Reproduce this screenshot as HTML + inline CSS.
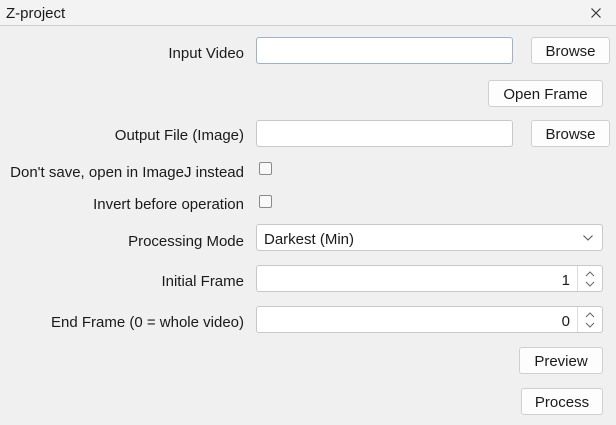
<!DOCTYPE html>
<html><head><style>
*{box-sizing:border-box;margin:0;padding:0}
body{width:616px;height:425px;background:#f0f0f0;font-family:"Liberation Sans",sans-serif;font-size:15px;color:#1a1a1a;position:relative;overflow:hidden}
.a{position:absolute}
.lbl{position:absolute;right:372px;white-space:nowrap;line-height:17px}
.box{position:absolute;background:#fff;border:1px solid #c8c8c8;border-radius:3px}
.btn{position:absolute;background:#fdfdfd;border:1px solid #cfcfcf;border-radius:3px;text-align:center;line-height:28px}
.cb{position:absolute;width:13px;height:13px;border:1px solid #8a8a8a;border-radius:2px;background:#f8f8f8}
.num{position:absolute;right:32px;top:6px;line-height:17px}
.sp{position:absolute;right:0;top:0;bottom:0;width:25px;border-left:1px solid #dcdcdc}
</style></head><body>
<div class="a" style="left:0;top:0;width:616px;height:26px;background:#f3f3f3;border-bottom:1px solid #cfcfcf"></div>
<div class="a" style="left:6px;top:5px;line-height:17px">Z-project</div>
<svg class="a" style="left:590px;top:7px" width="12" height="12"><path d="M1.5 1.5L10.5 10.5M10.5 1.5L1.5 10.5" stroke="#333" stroke-width="1.2"/></svg>

<div class="lbl" style="top:45px">Input Video</div>
<div class="box" style="left:256px;top:37px;width:257px;height:27px;border-color:#99b4d1"></div>
<div class="btn" style="left:531px;top:37px;width:79px;height:27px">Browse</div>
<div class="btn" style="left:488px;top:80px;width:115px;height:27px">Open Frame</div>

<div class="lbl" style="top:127px">Output File (Image)</div>
<div class="box" style="left:256px;top:120px;width:257px;height:27px"></div>
<div class="btn" style="left:531px;top:120px;width:79px;height:27px">Browse</div>

<div class="lbl" style="top:164px">Don't save, open in ImageJ instead</div>
<div class="cb" style="left:259px;top:162px"></div>
<div class="lbl" style="top:196px">Invert before operation</div>
<div class="cb" style="left:259px;top:195px"></div>

<div class="lbl" style="top:233px">Processing Mode</div>
<div class="box" style="left:256px;top:224px;width:347px;height:27px"><div class="a" style="left:7px;top:6px;line-height:17px">Darkest (Min)</div>
<svg class="a" style="right:9px;top:10px" width="10" height="6"><path d="M0.5 0.5L5 5L9.5 0.5" stroke="#555" fill="none"/></svg></div>

<div class="lbl" style="top:273px">Initial Frame</div>
<div class="box" style="left:256px;top:265px;width:347px;height:27px"><div class="num">1</div><div class="sp">
<svg class="a" style="left:7px;top:5px" width="10" height="16"><path d="M1 5L5 1L9 5M1 11L5 15L9 11" stroke="#666" fill="none"/></svg></div></div>

<div class="lbl" style="top:314px">End Frame (0 = whole video)</div>
<div class="box" style="left:256px;top:306px;width:347px;height:27px"><div class="num">0</div><div class="sp">
<svg class="a" style="left:7px;top:5px" width="10" height="16"><path d="M1 5L5 1L9 5M1 11L5 15L9 11" stroke="#666" fill="none"/></svg></div></div>

<div class="btn" style="left:519px;top:347px;width:84px;height:27px">Preview</div>
<div class="btn" style="left:521px;top:388px;width:82px;height:27px">Process</div>
</body></html>
